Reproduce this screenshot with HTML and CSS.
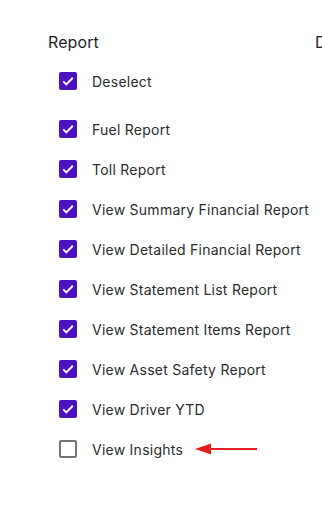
FILE: index.html
```html
<!DOCTYPE html>
<html lang="en">
<head>
    <meta charset="UTF-8">
    <title>Permissions</title>
    <link rel="stylesheet" href="styles.css">
</head>
<body>
<div class="columns">
    <div class="group">
        <div class="title">Report</div>
        <div class="list">
            <label class="row deselect">
                <span class="box checked"><svg viewBox="0 0 18 18"><path d="M4.2 9.4l3.1 3 6.5-6.6" /></svg></span>
                <span>Deselect</span>
            </label>
            <label class="row">
                <span class="box checked"><svg viewBox="0 0 18 18"><path d="M4.2 9.4l3.1 3 6.5-6.6" /></svg></span>
                <span>Fuel Report</span>
            </label>
            <label class="row">
                <span class="box checked"><svg viewBox="0 0 18 18"><path d="M4.2 9.4l3.1 3 6.5-6.6" /></svg></span>
                <span>Toll Report</span>
            </label>
            <label class="row">
                <span class="box checked"><svg viewBox="0 0 18 18"><path d="M4.2 9.4l3.1 3 6.5-6.6" /></svg></span>
                <span>View Summary Financial Report</span>
            </label>
            <label class="row">
                <span class="box checked"><svg viewBox="0 0 18 18"><path d="M4.2 9.4l3.1 3 6.5-6.6" /></svg></span>
                <span>View Detailed Financial Report</span>
            </label>
            <label class="row">
                <span class="box checked"><svg viewBox="0 0 18 18"><path d="M4.2 9.4l3.1 3 6.5-6.6" /></svg></span>
                <span>View Statement List Report</span>
            </label>
            <label class="row">
                <span class="box checked"><svg viewBox="0 0 18 18"><path d="M4.2 9.4l3.1 3 6.5-6.6" /></svg></span>
                <span>View Statement Items Report</span>
            </label>
            <label class="row">
                <span class="box checked"><svg viewBox="0 0 18 18"><path d="M4.2 9.4l3.1 3 6.5-6.6" /></svg></span>
                <span>View Asset Safety Report</span>
            </label>
            <label class="row">
                <span class="box checked"><svg viewBox="0 0 18 18"><path d="M4.2 9.4l3.1 3 6.5-6.6" /></svg></span>
                <span>View Driver YTD</span>
            </label>
            <label class="row">
                <span class="box"></span>
                <span>View Insights</span>
                <svg class="arrow" viewBox="0 0 64 14">
                    <path d="M14 7H62" stroke="#e2201f" stroke-width="2" />
                    <path d="M0 7L16 1.5V12.5Z" fill="#e2201f" />
                </svg>
            </label>
        </div>
    </div>
    <div class="group">
        <div class="title">Driver</div>
    </div>
</div>
</body>
</html>
```

FILE: styles.css
```css
* {
    box-sizing: border-box;
}

html, body {
    margin: 0;
    padding: 0;
    background: #fff;
    font-family: Inter, "Noto Sans", sans-serif;
    overflow: hidden;
}

.columns {
    display: flex;
    padding: 31px 0 0 48px;
    width: 700px;
}

.group {
    width: 267px;
    flex: none;
}

.title {
    font-size: 16px;
    line-height: 22px;
    color: #1f1f1f;
    letter-spacing: 0.1px;
}

.list {
    display: flex;
    flex-direction: column;
    margin-top: 8px;
}

.row {
    display: flex;
    align-items: center;
    height: 40px;
    padding-left: 11px;
    font-size: 14px;
    letter-spacing: 0.25px;
    color: #2b2b2b;
    white-space: nowrap;
}

.row.deselect {
    margin-bottom: 8px;
}

.box {
    width: 18px;
    height: 18px;
    margin-right: 15px;
    border: 2px solid #737373;
    border-radius: 2px;
    display: flex;
    flex: none;
}

.box.checked {
    background: #4c0fc2;
    border: none;
}

.box svg {
    width: 18px;
    height: 18px;
}

.box path {
    fill: none;
    stroke: #fff;
    stroke-width: 2;
}

.arrow {
    width: 64px;
    height: 14px;
    margin-left: 12px;
}
```
